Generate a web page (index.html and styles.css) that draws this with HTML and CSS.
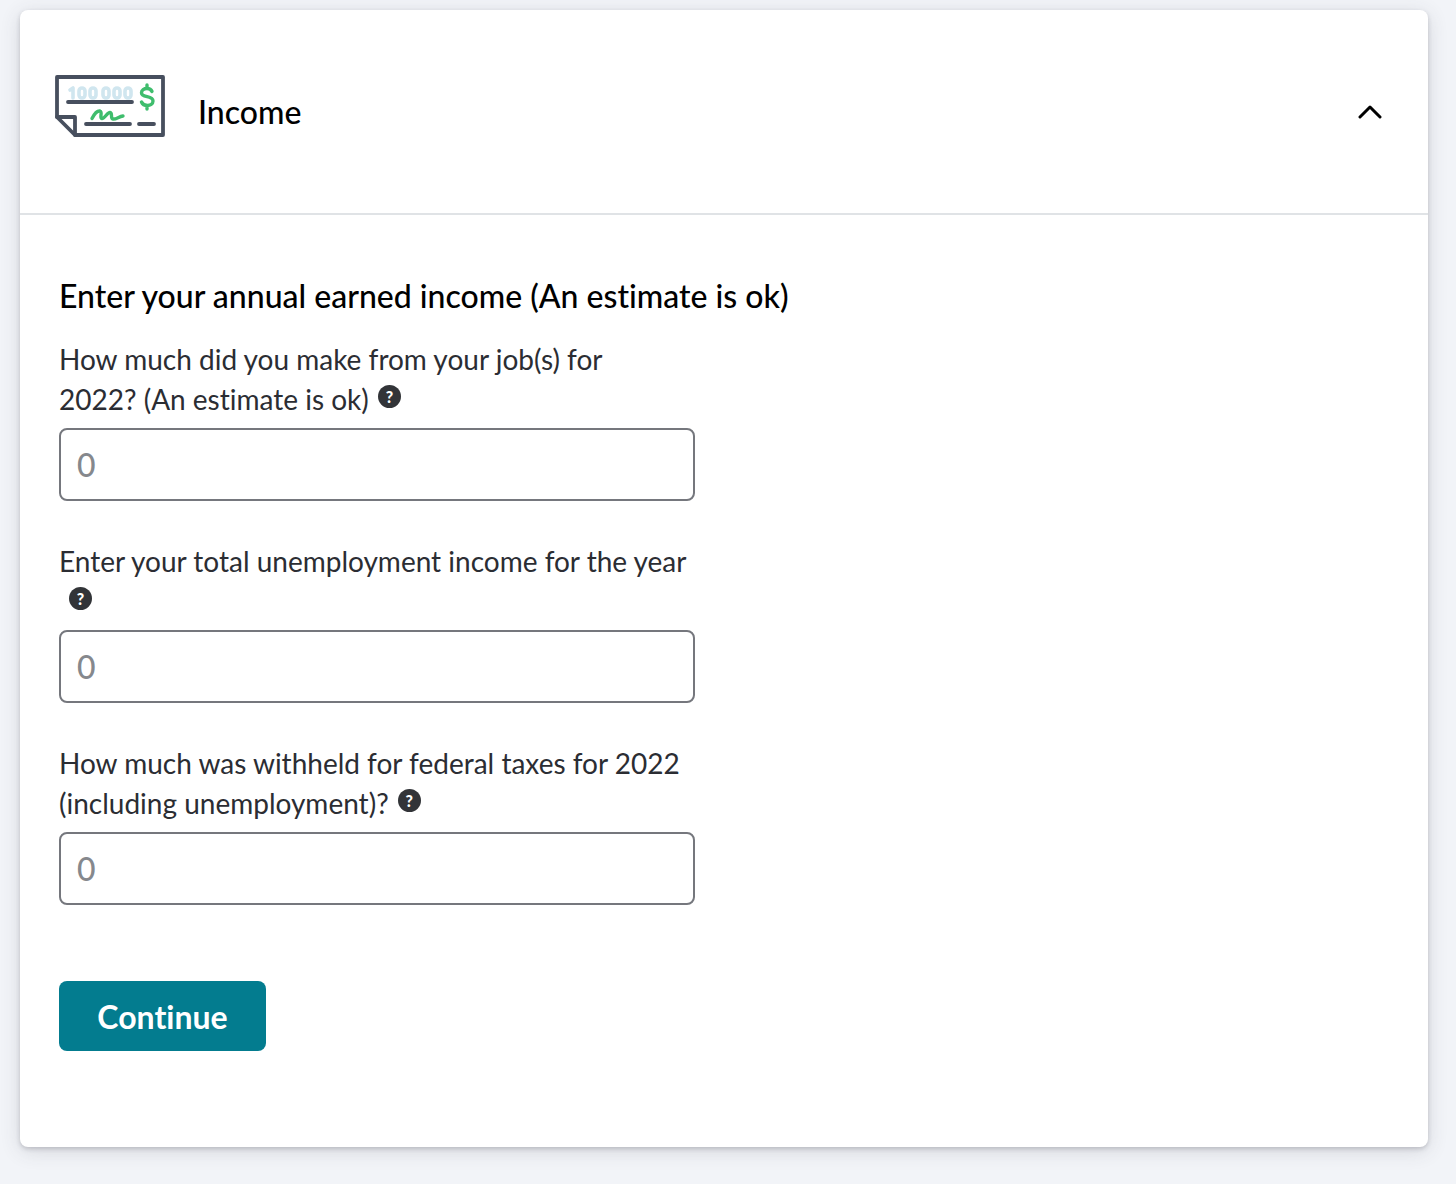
FILE: index.html
```html
<!DOCTYPE html>
<html lang="en">
<head>
<meta charset="utf-8">
<meta name="viewport" content="width=device-width, initial-scale=1">
<title>Income</title>
<link rel="stylesheet" href="styles.css">
</head>
<body>
<main class="card">
  <header class="card-header">
    <svg class="check-icon" viewBox="0 0 112 64" fill="none" stroke-linecap="round" stroke-linejoin="round" aria-hidden="true">
      <g stroke="#d0e6ef" stroke-width="3.6">
        <path d="M16 16l3-2v10"/>
        <rect x="25" y="14" width="6" height="10" rx="3"/>
        <rect x="36" y="14" width="6" height="10" rx="3"/>
        <rect x="49" y="14" width="6" height="10" rx="3"/>
        <rect x="60" y="14" width="6" height="10" rx="3"/>
        <rect x="71" y="14" width="6" height="10" rx="3"/>
      </g>
      <g stroke="#474f5e" stroke-width="3.8">
        <path d="M3 3h106v58H21L3 43z"/>
        <path d="M3 43h18v18"/>
        <path d="M14 28h64M32 50h44M85 50h15"/>
      </g>
      <g stroke="#3fbd6d" stroke-width="3.4">
        <path d="M38 44.500c2-4 5-8 8-7.500 3 1-1 7 2 7.500 3 0 5-6 8-6 3 .5 0 6 3 6.500s6-2.500 10-3"/>
        <path d="M98 17.500c-1-2.500-3-3-5-3-3 0-5.500 1.500-5.500 4.200 0 5.500 11.500 2.500 11.500 8.300 0 3-3 4.500-5.500 4.500-3 0-5-1-6-3.500M93 14v-3M93 31.500v3.500"/>
      </g>
    </svg>
    <h1 class="card-title">Income</h1>
    <button class="toggle" type="button" aria-label="Collapse income" aria-expanded="true">
      <svg class="chevron" viewBox="0 0 24 16" fill="none" stroke="#000" stroke-width="3" stroke-linecap="round" stroke-linejoin="round" aria-hidden="true"><path d="M2 13l10-10 10 10"/></svg>
    </button>
  </header>
  <form class="card-body">
    <h2 class="section-title">Enter your annual earned income (An estimate is ok)</h2>
    <div class="field">
      <div class="label-row">
        <label for="earned">How much did you make from your job(s) for<br>2022? (An estimate is ok)</label>
        <button class="help" type="button" aria-label="Help with job income">?</button>
      </div>
      <input class="amount" id="earned" type="text" inputmode="numeric" placeholder="0">
    </div>
    <div class="field">
      <div class="label-row">
        <label for="unemployment">Enter your total unemployment income for the year</label><br>
        <button class="help" type="button" aria-label="Help with unemployment income">?</button>
      </div>
      <input class="amount" id="unemployment" type="text" inputmode="numeric" placeholder="0">
    </div>
    <div class="field">
      <div class="label-row">
        <label for="withheld">How much was withheld for federal taxes for 2022<br>(including unemployment)?</label>
        <button class="help" type="button" aria-label="Help with federal withholding">?</button>
      </div>
      <input class="amount" id="withheld" type="text" inputmode="numeric" placeholder="0">
    </div>
    <button class="continue" type="submit">Continue</button>
  </form>
</main>
</body>
</html>
```
FILE: styles.css
```css
*, *::before, *::after {
  box-sizing: border-box;
}

body {
  margin: 0;
  padding: 10px 28px 36px 20px;
  background: #f2f4f8;
  color: #000;
  font-family: Lato, "Liberation Sans", sans-serif;
  font-variant-ligatures: none;
}

button,
input {
  font-family: inherit;
  font-variant-ligatures: inherit;
}

.card {
  background: #fff;
  border-radius: 8px;
  box-shadow: 0 2px 4px rgba(60, 60, 75, 0.22), 0 4px 20px rgba(60, 60, 75, 0.16);
}

.card-header {
  display: flex;
  align-items: center;
  padding: 64px 46px 75px 34px;
  border-bottom: 2px solid #e0e3e6;
}

.check-icon {
  width: 112px;
  height: 64px;
}

.card-title {
  flex: 1;
  margin: 12px 0 0 32px;
  font-size: 32px;
  line-height: 40px;
  font-weight: 500;
}

.toggle {
  display: flex;
  margin-top: 12px;
  padding: 0;
  border: 0;
  background: none;
}

.chevron {
  width: 24px;
  height: 16px;
}

.card-body {
  padding: 61px 39px 96px;
}

.section-title {
  margin: 0 0 23px;
  font-size: 32px;
  line-height: 40px;
  font-weight: 500;
}

.field {
  max-width: 636px;
  margin-bottom: 40px;
}

.label-row {
  margin-bottom: 9px;
  color: #2b2d33;
  font-size: 28px;
  line-height: 40px;
}

.help {
  width: 23px;
  height: 23px;
  margin-left: 2px;
  padding: 0;
  border: 0;
  border-radius: 50%;
  background: #323438;
  color: #fff;
  font-size: 16px;
  line-height: 23px;
  font-weight: 900;
  vertical-align: 7px;
}

br + .help {
  margin-left: 10px;
}

.amount {
  display: block;
  width: 100%;
  height: 73px;
  padding: 0 16px;
  border: 2px solid #75777d;
  border-radius: 8px;
  background: #fff;
  color: #2b2d33;
  font-size: 32px;
}

.amount::placeholder {
  color: #85888d;
  font-weight: 500;
  opacity: 1;
}

.continue {
  display: block;
  min-width: 207px;
  height: 70px;
  margin-top: 76px;
  padding: 0 36px;
  border: 0;
  border-radius: 8px;
  background: #037c8f;
  color: #fff;
  font-size: 32px;
  font-weight: 700;
}
```
